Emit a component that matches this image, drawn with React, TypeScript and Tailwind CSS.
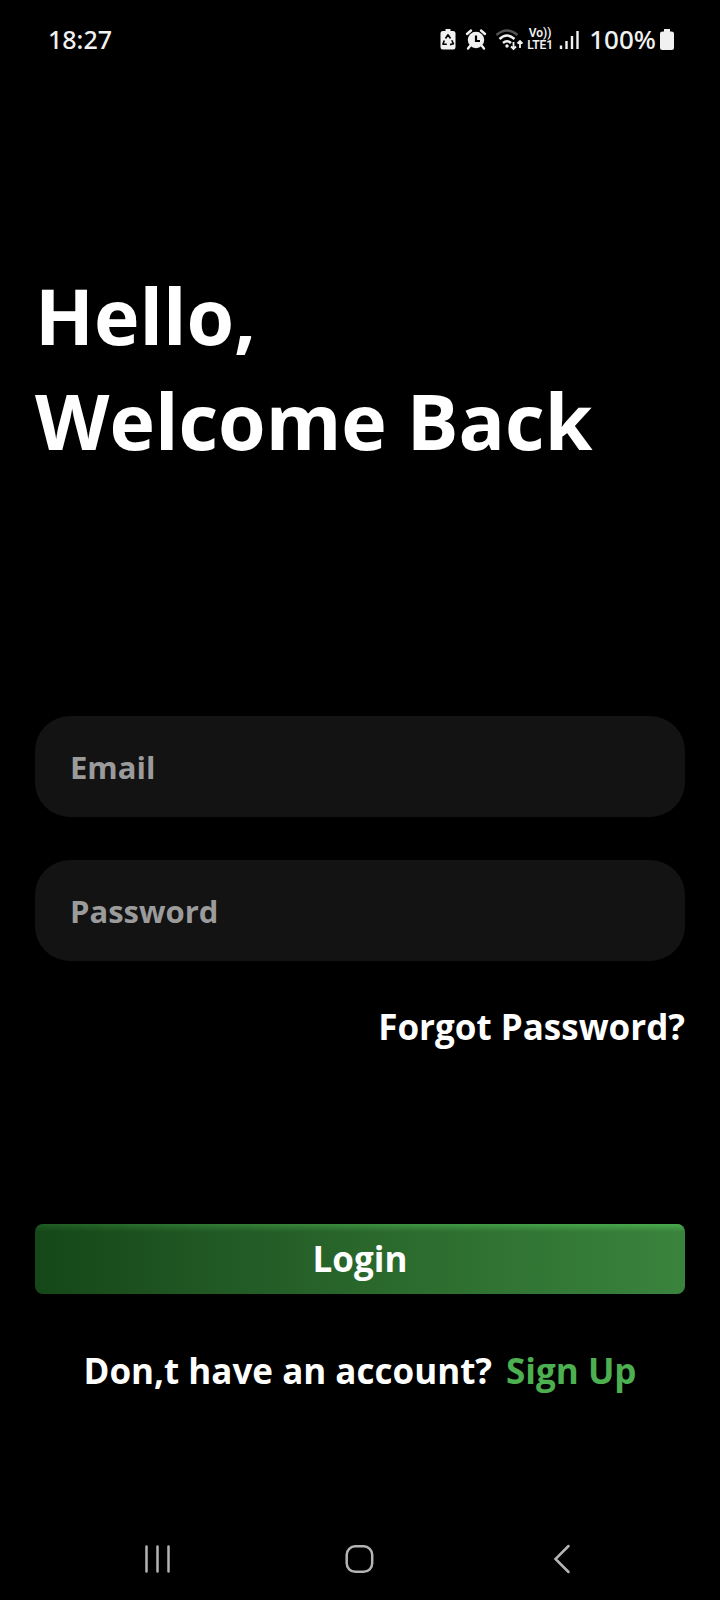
import React from "react";

function StatusBar() {
  return (
    <header className="flex h-[78px] items-center justify-between pr-[46px] pl-12 font-['Noto_Sans',sans-serif] text-[#f1f1f1]">
      <time className="text-[25px] leading-8 font-medium">18:27</time>
      <div className="flex items-center">
        <svg className="mr-2 h-6 w-[18px]" viewBox="0 0 18 24" aria-hidden="true">
          <path d="M6.500 2h5v2h2.500q2.500 0 2.500 2v14q0 2.500-2.500 2.500H4q-2.500 0-2.500-2.500V6q0-2 2.500-2h2.500z" fill="currentColor" />
          <path d="M6.500 11.500L9 7.800l2.500 3.700M12.800 13.200l1.600 3.600-3.400.8M7.800 17.300H3.900l1.400-3.800" fill="none" stroke="#000" strokeWidth="1.600" strokeLinejoin="round" />
        </svg>
        <svg className="mr-2 h-6 w-[22px]" viewBox="0 0 22 24" aria-hidden="true">
          <circle cx="11" cy="13" r="8.200" fill="currentColor" />
          <path d="M2 7l4-3.500M20 7l-4-3.500M5 19l-2 2.500M17 19l2 2.500" stroke="currentColor" strokeWidth="2.400" strokeLinecap="round" />
          <path d="M11 8.500v5.500h4" fill="none" stroke="#000" strokeWidth="2.200" />
        </svg>
        <svg className="mr-1 h-6 w-7" viewBox="0 0 28 24" fill="none" stroke="currentColor" aria-hidden="true">
          <path d="M1.500 8q10.500-9 21 0" strokeWidth="2.400" opacity=".35" />
          <path d="M4.500 12q7.500-7 15 0M8 16q4-3.500 8 0" strokeWidth="2.500" />
          <circle cx="12" cy="19" r="1.700" fill="currentColor" stroke="none" />
          <path d="M18.500 15v7M16 19.500l2.500 2.500 2.500-2.500M25 21v-7M22.500 16.500l2.500-2.500 2.500 2.500" strokeWidth="1.800" />
        </svg>
        <span className="mr-1.5 flex flex-col items-center font-['Roboto',sans-serif] text-[12px] leading-3 font-semibold">
          <span>Vo))</span>
          <span>LTE1</span>
        </span>
        <svg className="mr-2.5 h-6 w-5" viewBox="0 0 20 24" aria-hidden="true">
          <path d="M2 18.500v3.500M7.500 14v8M13 9v13M18.500 4v18" stroke="currentColor" strokeWidth="2.400" />
        </svg>
        <span className="text-[26px] leading-8 font-medium">100%</span>
        <svg className="ml-1 h-6 w-[14px]" viewBox="0 0 14 24" aria-hidden="true">
          <path d="M4 2h6v2.500h1.500q2.500 0 2.500 2v14q0 2.500-2.500 2.500h-9q-2.500 0-2.500-2.500V6.500q0-2 2.500-2h1.500z" fill="currentColor" />
        </svg>
      </div>
    </header>
  );
}

function Field({ id, label, type }: { id: string; label: string; type: string }) {
  return (
    <input
      id={id}
      type={type}
      aria-label={label}
      placeholder={label}
      className="h-[101px] w-full rounded-[35px] bg-[#131313] px-[35px] text-[31px] font-bold text-white outline-none placeholder:text-[#9b9b9b] placeholder:opacity-100"
    />
  );
}

function NavBar() {
  return (
    <nav className="mt-auto flex h-[83px] items-center justify-around px-14 text-[#b4b4b4]">
      <button type="button" aria-label="Recent apps" className="p-2">
        <svg className="size-8" viewBox="0 0 32 32" fill="none" stroke="currentColor" strokeWidth="2.500" strokeLinecap="round">
          <path d="M5.500 3.500v25M16.500 3.500v25M27.500 3.500v25" />
        </svg>
      </button>
      <button type="button" aria-label="Home" className="p-2">
        <svg className="size-8" viewBox="0 0 32 32" fill="none" stroke="currentColor" strokeWidth="2.500">
          <rect x="2.700" y="3.300" width="25.500" height="25.500" rx="8.500" />
        </svg>
      </button>
      <button type="button" aria-label="Back" className="p-2">
        <svg className="size-8" viewBox="0 0 32 32" fill="none" stroke="currentColor" strokeWidth="2.500" strokeLinecap="round">
          <path d="M21.500 3L8.500 16L21.500 29" />
        </svg>
      </button>
    </nav>
  );
}

export default function App() {
  return (
    <div className="flex min-h-screen flex-col bg-black font-['Open_Sans',sans-serif] text-white">
      <StatusBar />
      <main className="flex flex-col px-[35px] pt-[185px]">
        <h1 className="text-[77px] leading-[105px] font-bold">
          Hello,
          <br />
          Welcome Back
        </h1>
        <form className="mt-[243px] flex flex-col" onSubmit={(e) => e.preventDefault()}>
          <div className="flex flex-col gap-[43px]">
            <Field id="email" label="Email" type="email" />
            <Field id="password" label="Password" type="password" />
          </div>
          <a href="#forgot" className="mt-[42px] self-end text-[35px] leading-12 font-bold">
            Forgot Password?
          </a>
          <button
            type="submit"
            className="relative mt-[173px] h-[70px] overflow-hidden rounded-lg bg-[linear-gradient(to_right,#154718,#225a25_30%,#2b6a2d_55%,#3a833d)] text-[35px] leading-12 font-bold before:absolute before:inset-x-0 before:top-0 before:h-2 before:bg-linear-to-r before:from-[#4caf50]/20 before:to-[#4caf50]/90 before:[mask-image:linear-gradient(#000,transparent)]"
          >
            Login
          </button>
        </form>
        <p className="mt-[53px] flex justify-center gap-[14px] text-[35px] leading-12 font-bold">
          Don,t have an account?
          <a href="#signup" className="text-[#4caf50]">
            Sign Up
          </a>
        </p>
      </main>
      <NavBar />
    </div>
  );
}
